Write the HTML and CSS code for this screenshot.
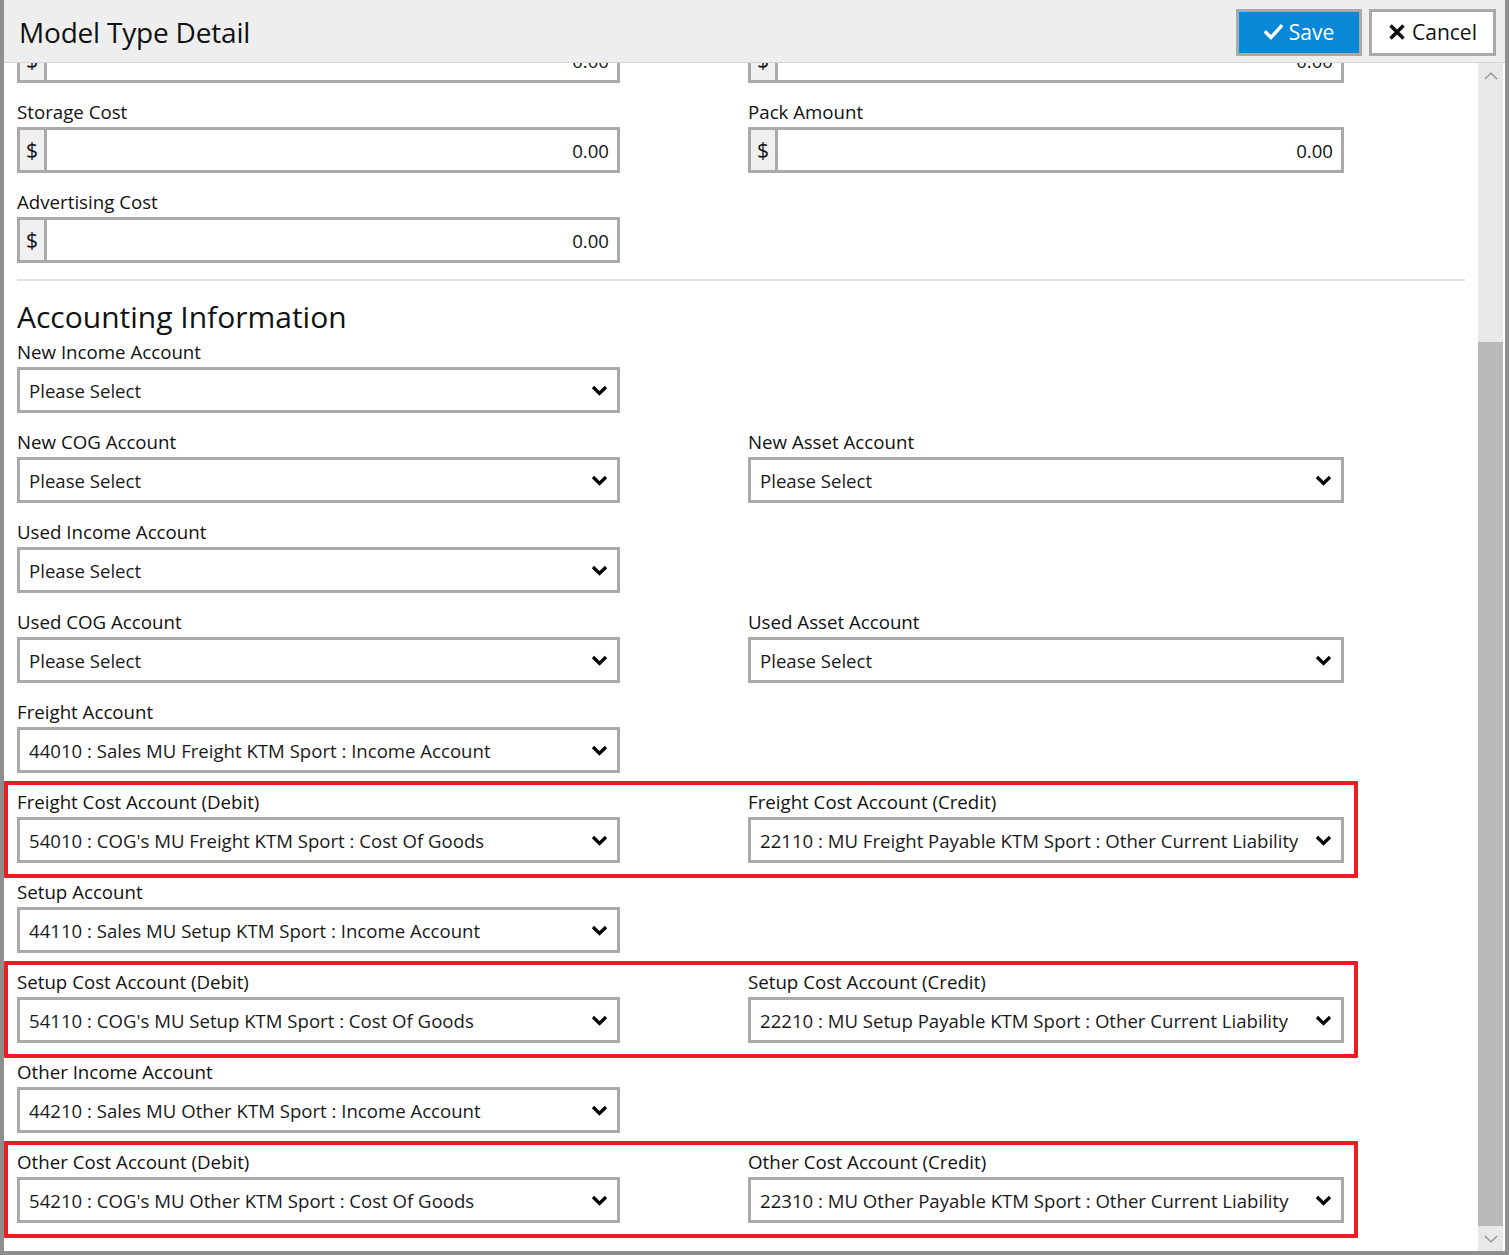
FILE: index.html
```html
<!DOCTYPE html>
<html lang="en">
<head>
<meta charset="utf-8">
<title>Model Type Detail</title>
<link rel="stylesheet" href="styles.css">
</head>
<body>
<div class="modal">
  <div class="header">
    <div class="title">Model Type Detail</div>
    <button class="btn btn-save">
      <svg class="ico" width="19" height="16" viewBox="0 0 19 16"><polyline points="2,8.5 7,13.5 17,2.5" fill="none" stroke="#fff" stroke-width="3.4" stroke-linecap="square"/></svg>
      <span>Save</span>
    </button>
    <button class="btn btn-cancel">
      <svg class="ico" width="18" height="18" viewBox="0 0 18 18"><path d="M2.5 2.5 L15.5 15.5 M15.5 2.5 L2.5 15.5" fill="none" stroke="#111" stroke-width="3.6"/></svg>
      <span>Cancel</span>
    </button>
  </div>
  <div class="main">
    <div class="content">
      <div class="row row-partial">
        <div class="field"><div class="control"><span class="addon">$</span><span class="num">0.00</span></div></div>
        <div class="field"><div class="control"><span class="addon">$</span><span class="num">0.00</span></div></div>
      </div>
      <div class="row">
        <div class="field"><div class="lbl">Storage Cost</div><div class="control"><span class="addon">$</span><span class="num">0.00</span></div></div>
        <div class="field"><div class="lbl">Pack Amount</div><div class="control"><span class="addon">$</span><span class="num">0.00</span></div></div>
      </div>
      <div class="row">
        <div class="field"><div class="lbl">Advertising Cost</div><div class="control"><span class="addon">$</span><span class="num">0.00</span></div></div>
      </div>
      <div class="divider"></div>
      <h2 class="section-title">Accounting Information</h2>

      <div class="row">
        <div class="field"><div class="lbl">New Income Account</div><div class="control select"><span class="val">Please Select</span><svg class="chev" width="17" height="11" viewBox="0 0 17 11"><polyline points="2,2 8.5,8.5 15,2" fill="none" stroke="#000" stroke-width="3.2"/></svg></div></div>
      </div>
      <div class="row">
        <div class="field"><div class="lbl">New COG Account</div><div class="control select"><span class="val">Please Select</span><svg class="chev" width="17" height="11" viewBox="0 0 17 11"><polyline points="2,2 8.5,8.5 15,2" fill="none" stroke="#000" stroke-width="3.2"/></svg></div></div>
        <div class="field"><div class="lbl">New Asset Account</div><div class="control select"><span class="val">Please Select</span><svg class="chev" width="17" height="11" viewBox="0 0 17 11"><polyline points="2,2 8.5,8.5 15,2" fill="none" stroke="#000" stroke-width="3.2"/></svg></div></div>
      </div>
      <div class="row">
        <div class="field"><div class="lbl">Used Income Account</div><div class="control select"><span class="val">Please Select</span><svg class="chev" width="17" height="11" viewBox="0 0 17 11"><polyline points="2,2 8.5,8.5 15,2" fill="none" stroke="#000" stroke-width="3.2"/></svg></div></div>
      </div>
      <div class="row">
        <div class="field"><div class="lbl">Used COG Account</div><div class="control select"><span class="val">Please Select</span><svg class="chev" width="17" height="11" viewBox="0 0 17 11"><polyline points="2,2 8.5,8.5 15,2" fill="none" stroke="#000" stroke-width="3.2"/></svg></div></div>
        <div class="field"><div class="lbl">Used Asset Account</div><div class="control select"><span class="val">Please Select</span><svg class="chev" width="17" height="11" viewBox="0 0 17 11"><polyline points="2,2 8.5,8.5 15,2" fill="none" stroke="#000" stroke-width="3.2"/></svg></div></div>
      </div>
      <div class="row">
        <div class="field"><div class="lbl">Freight Account</div><div class="control select"><span class="val">44010 : Sales MU Freight KTM Sport : Income Account</span><svg class="chev" width="17" height="11" viewBox="0 0 17 11"><polyline points="2,2 8.5,8.5 15,2" fill="none" stroke="#000" stroke-width="3.2"/></svg></div></div>
      </div>
      <div class="row hl">
        <div class="field"><div class="lbl">Freight Cost Account (Debit)</div><div class="control select"><span class="val">54010 : COG's MU Freight KTM Sport : Cost Of Goods</span><svg class="chev" width="17" height="11" viewBox="0 0 17 11"><polyline points="2,2 8.5,8.5 15,2" fill="none" stroke="#000" stroke-width="3.2"/></svg></div></div>
        <div class="field"><div class="lbl">Freight Cost Account (Credit)</div><div class="control select"><span class="val">22110 : MU Freight Payable KTM Sport : Other Current Liability</span><svg class="chev" width="17" height="11" viewBox="0 0 17 11"><polyline points="2,2 8.5,8.5 15,2" fill="none" stroke="#000" stroke-width="3.2"/></svg></div></div>
      </div>
      <div class="row">
        <div class="field"><div class="lbl">Setup Account</div><div class="control select"><span class="val">44110 : Sales MU Setup KTM Sport : Income Account</span><svg class="chev" width="17" height="11" viewBox="0 0 17 11"><polyline points="2,2 8.5,8.5 15,2" fill="none" stroke="#000" stroke-width="3.2"/></svg></div></div>
      </div>
      <div class="row hl">
        <div class="field"><div class="lbl">Setup Cost Account (Debit)</div><div class="control select"><span class="val">54110 : COG's MU Setup KTM Sport : Cost Of Goods</span><svg class="chev" width="17" height="11" viewBox="0 0 17 11"><polyline points="2,2 8.5,8.5 15,2" fill="none" stroke="#000" stroke-width="3.2"/></svg></div></div>
        <div class="field"><div class="lbl">Setup Cost Account (Credit)</div><div class="control select"><span class="val">22210 : MU Setup Payable KTM Sport : Other Current Liability</span><svg class="chev" width="17" height="11" viewBox="0 0 17 11"><polyline points="2,2 8.5,8.5 15,2" fill="none" stroke="#000" stroke-width="3.2"/></svg></div></div>
      </div>
      <div class="row">
        <div class="field"><div class="lbl">Other Income Account</div><div class="control select"><span class="val">44210 : Sales MU Other KTM Sport : Income Account</span><svg class="chev" width="17" height="11" viewBox="0 0 17 11"><polyline points="2,2 8.5,8.5 15,2" fill="none" stroke="#000" stroke-width="3.2"/></svg></div></div>
      </div>
      <div class="row hl">
        <div class="field"><div class="lbl">Other Cost Account (Debit)</div><div class="control select"><span class="val">54210 : COG's MU Other KTM Sport : Cost Of Goods</span><svg class="chev" width="17" height="11" viewBox="0 0 17 11"><polyline points="2,2 8.5,8.5 15,2" fill="none" stroke="#000" stroke-width="3.2"/></svg></div></div>
        <div class="field"><div class="lbl">Other Cost Account (Credit)</div><div class="control select"><span class="val">22310 : MU Other Payable KTM Sport : Other Current Liability</span><svg class="chev" width="17" height="11" viewBox="0 0 17 11"><polyline points="2,2 8.5,8.5 15,2" fill="none" stroke="#000" stroke-width="3.2"/></svg></div></div>
      </div>
    </div>
    <div class="scrollbar">
      <div class="sb-btn"><svg width="14" height="8" viewBox="0 0 14 8"><polyline points="1,7 7,1 13,7" fill="none" stroke="#8a8a8a" stroke-width="1.2"/></svg></div>
      <div class="sb-track">
        <div class="sb-space"></div>
        <div class="sb-thumb"></div>
      </div>
      <div class="sb-btn"><svg width="14" height="8" viewBox="0 0 14 8"><polyline points="1,1 7,7 13,1" fill="none" stroke="#8a8a8a" stroke-width="1.2"/></svg></div>
    </div>
  </div>
</div>
</body>
</html>
```

FILE: styles.css
```css
* {
  box-sizing: border-box;
}

html, body {
  margin: 0;
  height: 100%;
}

body {
  background: #8e8e8e;
  font-family: "Open Sans", "Noto Sans", "Liberation Sans", sans-serif;
  color: #111;
  overflow: hidden;
}

.modal {
  margin-left: 4px;
  width: 1501px;
  height: 1251px;
  background: #fff;
  display: flex;
  flex-direction: column;
  overflow: hidden;
}

.header {
  flex-shrink: 0;
  height: 63px;
  background: #eeeeee;
  border-bottom: 1px solid #d6d6d6;
  display: flex;
  align-items: center;
  padding: 2px 9px 0 15px;
}

.title {
  flex: 1;
  font-size: 28px;
  color: #111;
  letter-spacing: -0.2px;
}

.btn {
  height: 47px;
  border: 3px solid #aaaaaa;
  display: flex;
  align-items: center;
  justify-content: center;
  gap: 6px;
  font-family: inherit;
  font-size: 21px;
  padding: 0;
  cursor: pointer;
}

.btn-save {
  width: 126px;
  margin-right: 7px;
  background: #0a88d8;
  color: #fff;
}

.btn-cancel {
  width: 127px;
  background: #fff;
  color: #111;
}

.ico {
  display: block;
}

.main {
  flex: 1;
  min-height: 0;
  display: flex;
}

.content {
  flex: 1;
  overflow: hidden;
  padding: 0 13px;
}

.row {
  display: grid;
  grid-template-columns: 603px 596px;
  column-gap: 128px;
  width: fit-content;
  margin-bottom: 18px;
}

.row-partial {
  margin-top: -26px;
}

.hl {
  position: relative;
}

.hl::before {
  content: "";
  position: absolute;
  top: -10px;
  bottom: -15px;
  left: -13px;
  right: -14px;
  border: 4px solid #ec1c24;
  border-radius: 1px;
  pointer-events: none;
}

.lbl {
  font-size: 18.7px;
  line-height: 20px;
  padding: 1px 0 5px;
  color: #111;
  white-space: nowrap;
}

.control {
  height: 46px;
  border: 3px solid #aaaaaa;
  background: #fff;
  display: flex;
  align-items: center;
}

.addon {
  width: 27px;
  align-self: stretch;
  background: #f0f0f0;
  border-right: 3px solid #aaaaaa;
  display: flex;
  align-items: center;
  justify-content: center;
  font-size: 21px;
  color: #111;
}

.num {
  flex: 1;
  text-align: right;
  padding-right: 8px;
  font-size: 18.6px;
  color: #111;
}

.select {
  padding: 1px 9px 0 9px;
  justify-content: space-between;
}

.val {
  font-size: 18.6px;
  color: #1a1a1a;
  white-space: nowrap;
  overflow: hidden;
}

.chev {
  flex-shrink: 0;
  display: block;
}

.divider {
  height: 2px;
  background: #dddddd;
  margin-top: -2px;
}

.section-title {
  font-size: 30px;
  line-height: 40px;
  font-weight: 400;
  margin: 16px 0 4px;
  color: #111;
}

.scrollbar {
  width: 25px;
  margin-right: 2px;
  background: #e8e8e8;
  display: flex;
  flex-direction: column;
}

.sb-btn {
  height: 25px;
  display: flex;
  align-items: center;
  justify-content: center;
}

.sb-track {
  flex: 1;
  display: flex;
  flex-direction: column;
}

.sb-space {
  height: 254px;
}

.sb-thumb {
  flex: 1;
  background: #b9b9b9;
}
```
